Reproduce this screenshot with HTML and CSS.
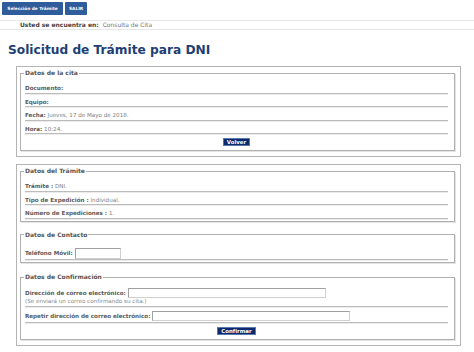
FILE: index.html
```html
<!DOCTYPE html>
<html lang="es">
<head>
    <meta charset="UTF-8">
    <title>Solicitud de Trámite para DNI</title>
    <link rel="stylesheet" href="styles.css">
</head>
<body>
    <div class="topbar">
        <a class="nav-btn nav-btn-wide" href="#">Selección de Trámite</a>
        <a class="nav-btn" href="#">SALIR</a>
    </div>

    <div class="breadcrumb">
        <b>Usted se encuentra en:</b> Consulta de Cita
    </div>

    <h1 class="title">Solicitud de Trámite para DNI</h1>

    <div class="panel">
        <fieldset class="group">
            <legend>Datos de la cita</legend>
            <div class="row"><span class="label">Documento:</span></div>
            <div class="row"><span class="label">Equipo:</span></div>
            <div class="row"><span class="label">Fecha:</span> Jueves, 17 de Mayo de 2018.</div>
            <div class="row"><span class="label">Hora:</span> 10:24.</div>
            <div class="actions"><button class="btn">Volver</button></div>
        </fieldset>
    </div>

    <div class="panel">
        <fieldset class="group group-plain">
            <legend>Datos del Trámite</legend>
            <div class="row"><span class="label">Trámite :</span> DNI.</div>
            <div class="row"><span class="label">Tipo de Expedición :</span> Individual.</div>
            <div class="row"><span class="label">Número de Expediciones :</span> 1.</div>
        </fieldset>

        <fieldset class="group group-plain group-next">
            <legend>Datos de Contacto</legend>
            <div class="row row-input row-phone">
                <span class="label">Teléfono Móvil:</span><input class="field field-phone" type="text">
            </div>
        </fieldset>

        <fieldset class="group group-next group-last">
            <legend>Datos de Confirmación</legend>
            <div class="row row-input">
                <span class="label">Dirección de correo electrónico:</span><input class="field field-email" type="text">
                <div class="hint">(Se enviará un correo confirmando su cita.)</div>
            </div>
            <div class="row row-input">
                <span class="label">Repetir dirección de correo electrónico:</span><input class="field field-email" type="text">
            </div>
            <div class="actions"><button class="btn">Confirmar</button></div>
        </fieldset>
    </div>
</body>
</html>
```

FILE: styles.css
```css
body {
    margin: 0;
    background: #fff;
    color: #808080;
    font-family: "DejaVu Sans", Verdana, sans-serif;
    font-size: 5.6px;
}

/* top navigation */
.topbar {
    display: flex;
    gap: 2px;
    padding: 2px 2px 0;
}
.nav-btn {
    display: block;
    height: 13px;
    line-height: 13px;
    padding: 0 4px;
    background: #2f5d9b;
    color: #fff;
    font-size: 4.3px;
    font-weight: bold;
    text-decoration: none;
    border-radius: 1px;
}
.nav-btn-wide {
    width: 53px;
    text-align: center;
}

.breadcrumb {
    margin-top: 5px;
    height: 8px;
    line-height: 8px;
    padding-left: 20px;
    border-top: 1px solid #e6e6e6;
    border-bottom: 1px solid #e6e6e6;
    font-size: 6px;
    color: #777;
}
.breadcrumb b {
    color: #444;
    margin-right: 2px;
}

.title {
    margin: 13px 0 0 8px;
    font-size: 12.2px;
    line-height: 14px;
    color: #1d3f73;
}

/* boxes */
.panel {
    box-sizing: border-box;
    width: 445px;
    margin: 9px 0 0 16px;
    padding: 2px 5px 5px 3px;
    border: 1px solid #b4b4b4;
}
.panel + .panel {
    margin-top: 7px;
}

.group {
    margin: 0;
    min-width: 0;
    padding: 3px 6px 4px 4px;
    border: 1px solid #b0b0b0;
    box-shadow: 1px 1px 0 #e4e4e4;
}
.group-plain {
    padding-bottom: 2px;
}
.group-next {
    margin-top: 9px;
}
.group-last {
    margin-top: 10px;
}
.group legend {
    margin-left: -1px;
    padding: 0 1px;
    line-height: 8px;
    font-size: 6px;
    font-weight: bold;
    color: #555;
}

.row {
    padding: 4px 0 0.5px;
    line-height: 8px;
    border-bottom: 1px solid #bcbcbc;
    box-shadow: 0 1px 0 #ececec;
}
.label {
    font-weight: bold;
    color: #5a5a5a;
}

.row-input {
    display: flex;
    flex-wrap: wrap;
    align-items: center;
    padding: 4px 0 1px;
}
.row-phone {
    padding: 6px 0 0.5px;
}
.field {
    box-sizing: border-box;
    margin: 0 0 0 2px;
    padding: 0;
    background: #fff;
    border: 1px solid #a0a0a0;
    border-right-color: #d0d0d0;
    border-bottom-color: #d0d0d0;
}
.field-phone {
    width: 46px;
    height: 11px;
}
.field-email {
    width: 198px;
    height: 10px;
}
.hint {
    width: 100%;
    line-height: 7px;
    color: #888;
}

.actions {
    text-align: center;
    padding-top: 4px;
}
.btn {
    display: inline-block;
    vertical-align: top;
    height: 8px;
    padding: 0 3px;
    background: #0d2b6c;
    color: #fff;
    border: 1px solid #5a78b0;
    font-family: "DejaVu Sans", Verdana, sans-serif;
    font-size: 5.4px;
    font-weight: bold;
    line-height: 6px;
    cursor: pointer;
}
```
